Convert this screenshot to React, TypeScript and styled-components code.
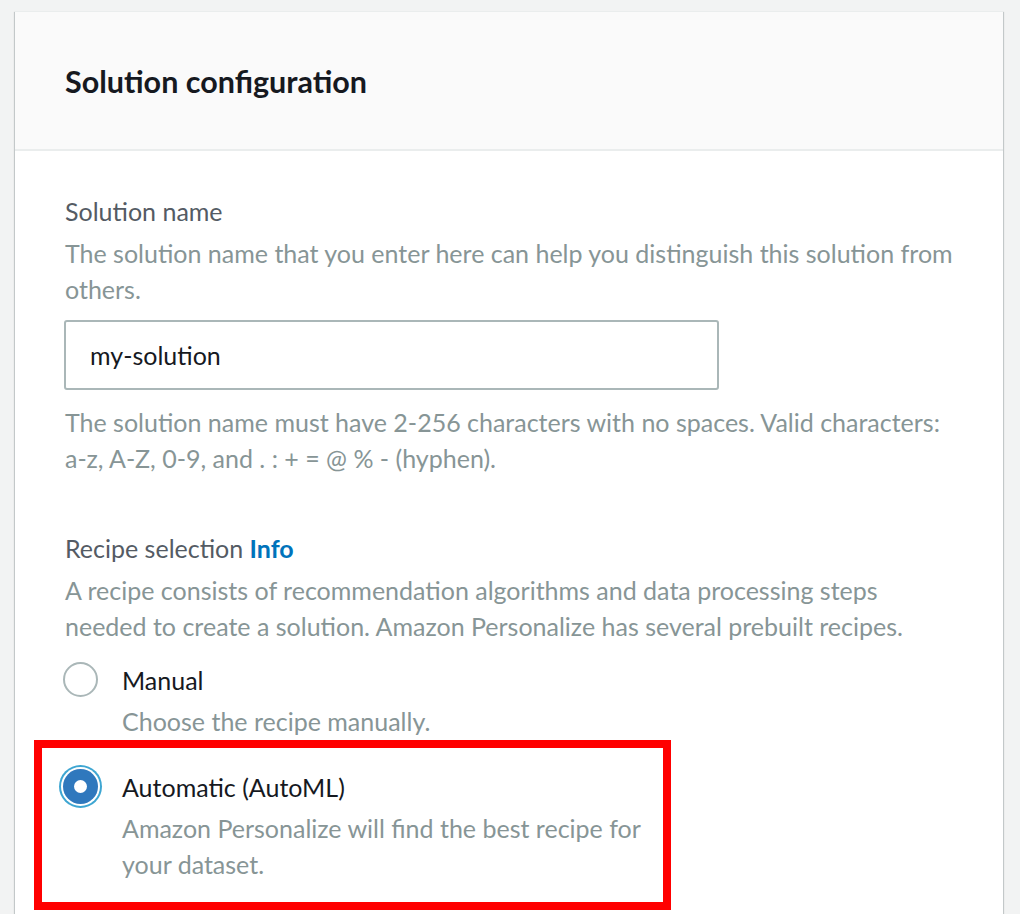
import React from "react";
import styled, { createGlobalStyle } from "styled-components";

const GlobalStyle = createGlobalStyle`
  html, body {
    margin: 0;
    padding: 0;
    background: #f2f3f3;
    font-family: Lato, "Liberation Sans", sans-serif;
  }
  * {
    box-sizing: border-box;
  }
`;

interface IOption {
  label: string;
  description: string;
  selected?: boolean;
}

const options: IOption[] = [
  { label: "Manual", description: "Choose the recipe manually." },
  {
    label: "Automatic (AutoML)",
    description: "Amazon Personalize will find the best recipe for your dataset.",
    selected: true,
  },
];

const RadioOption = (props: { option: IOption }) => {
  const { option } = props;
  return (
    <OptionRow>
      <Radio $selected={!!option.selected}>{option.selected && <Dot />}</Radio>
      <OptionText>
        <OptionLabel>{option.label}</OptionLabel>
        <Description $tight>{option.description}</Description>
      </OptionText>
    </OptionRow>
  );
};

export default function App() {
  return (
    <>
      <GlobalStyle />
      <Page>
        <Panel>
          <Header>
            <Title>Solution configuration</Title>
          </Header>
          <Body>
            <Field>
              <Label>Solution name</Label>
              <Description>
                The solution name that you enter here can help you distinguish this solution from
                others.
              </Description>
              <Input defaultValue="my-solution" />
              <Constraint>
                The solution name must have 2-256 characters with no spaces. Valid characters:
                a-z, A-Z, 0-9, and . : + = @ % - (hyphen).
              </Constraint>
            </Field>

            <Field $gap={54}>
              <Label>
                Recipe selection <InfoLink href="#">Info</InfoLink>
              </Label>
              <Description>
                A recipe consists of recommendation algorithms and data processing steps needed
                to create a solution. Amazon Personalize has several prebuilt recipes.
              </Description>
              <Options>
                <RadioOption option={options[0]} />
                <Highlight>
                  <RadioOption option={options[1]} />
                </Highlight>
              </Options>
            </Field>
          </Body>
        </Panel>
      </Page>
    </>
  );
}

const Page = styled.div`
  height: 914px;
  overflow: hidden;
  padding: 11px 17px 0 15px;
`;

const Panel = styled.section`
  background: #ffffff;
  border-top: 1px solid #eaeded;
  box-shadow: 0 1px 1px 0 rgba(0, 28, 36, 0.3), 1px 1px 1px 0 rgba(0, 28, 36, 0.15),
    -1px 1px 1px 0 rgba(0, 28, 36, 0.15);
  min-height: 1000px;
`;

const Header = styled.div`
  height: 139px;
  background: #fafafa;
  border-bottom: 2px solid #eaeded;
  display: flex;
  align-items: center;
  padding: 0 50px;
`;

const Title = styled.h2`
  margin: 0;
  font-size: 30.5px;
  font-weight: 700;
  color: #16191f;
`;

const Body = styled.div`
  padding: 42px 50px 0 50px;
`;

const Field = styled.div<{ $gap?: number }>`
  margin-top: ${(p) => p.$gap || 0}px;
`;

const Label = styled.div`
  font-size: 25px;
  line-height: 36px;
  color: #545b64;
`;

const InfoLink = styled.a`
  color: #0073bb;
  font-weight: 700;
  text-decoration: none;
`;

const Description = styled.div<{ $tight?: boolean }>`
  margin-top: ${(p) => (p.$tight ? 5 : 6)}px;
  font-size: 25px;
  line-height: 36px;
  color: #879596;
`;

const Input = styled.input`
  display: block;
  margin: 13px 0 0 -1px;
  width: 655px;
  height: 70px;
  padding: 0 24px;
  border: 2px solid #aab7b8;
  border-radius: 3px;
  font-family: inherit;
  font-size: 25px;
  color: #16191f;
  outline: none;
`;

const Constraint = styled.div`
  margin-top: 14px;
  font-size: 25px;
  line-height: 36px;
  color: #879596;
`;

const Options = styled.div`
  margin-top: 18px;
  display: flex;
  flex-direction: column;
`;

const OptionRow = styled.div`
  display: flex;
  align-items: flex-start;
`;

const Radio = styled.span<{ $selected: boolean }>`
  flex: none;
  width: 35px;
  height: 35px;
  margin: 0 0 0 -2px;
  border-radius: 50%;
  display: flex;
  align-items: center;
  justify-content: center;
  border: ${(p) => (p.$selected ? "none" : "2.5px solid #aab7b8")};
  background: ${(p) => (p.$selected ? "#2f78bd" : "#ffffff")};
  box-shadow: ${(p) => (p.$selected ? "0 0 0 2px #ffffff, 0 0 0 4px #3ea6d2" : "none")};
`;

const Dot = styled.span`
  width: 13px;
  height: 13px;
  border-radius: 50%;
  background: #ffffff;
`;

const OptionText = styled.div`
  margin-left: 24px;
  padding-right: 20px;
`;

const OptionLabel = styled.div`
  font-size: 25px;
  line-height: 36px;
  color: #16191f;
`;

const Highlight = styled.div`
  margin: 1px 0 0 -31px;
  width: 637px;
  border: 8px solid #ff0000;
  padding: 21px 0 20px 23px;
`;
